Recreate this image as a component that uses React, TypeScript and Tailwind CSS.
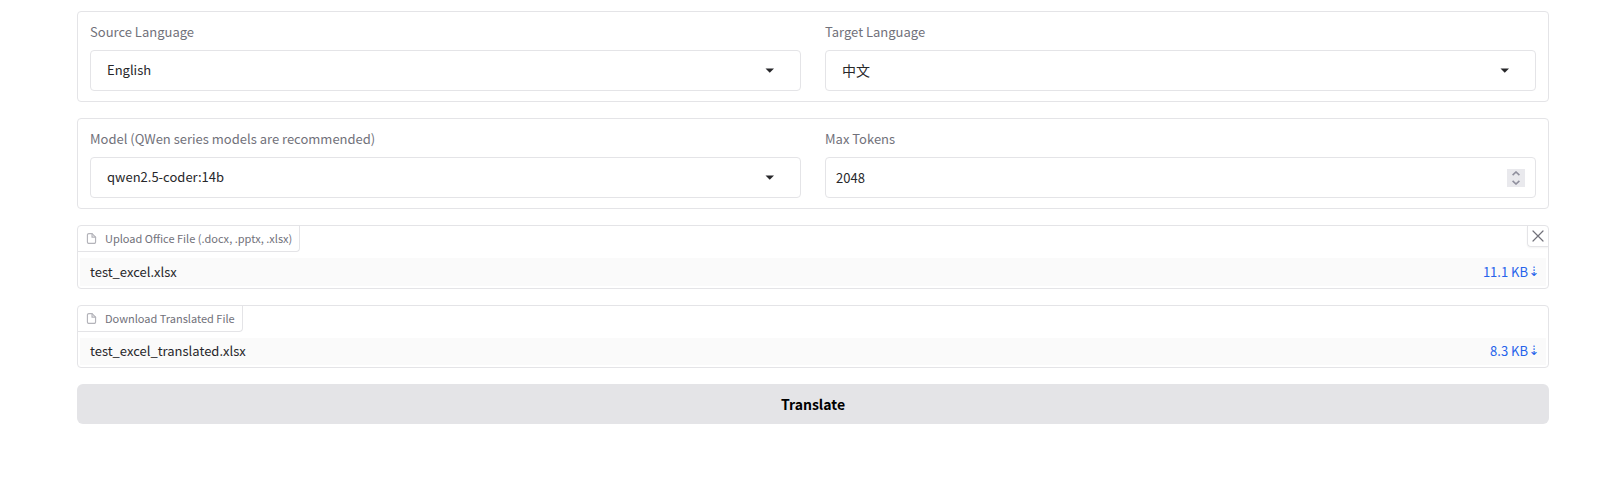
import { useState } from "react";
import type { ReactNode } from "react";

const label = "block text-[13px] leading-5 text-[#71717a]";
const field =
  "h-[41px] w-full appearance-none rounded border border-[#e4e4e7] bg-white pb-px leading-5 text-[#27272a] outline-none";

function Group({ children }: { children: ReactNode }) {
  return (
    <div className="grid grid-cols-2 gap-6 rounded border border-[#e4e4e7] bg-white px-3 py-2.5">
      {children}
    </div>
  );
}

function SelectField({ id, title, options, textSize = "text-[13px]" }: { id: string; title: string; options: string[]; textSize?: string }) {
  return (
    <div className="flex flex-col gap-2">
      <label htmlFor={id} className={label}>{title}</label>
      <div className="grid items-center">
        <select id={id} className={`${field} ${textSize} col-start-1 row-start-1 px-4`}>
          {options.map((o) => (
            <option key={o}>{o}</option>
          ))}
        </select>
        <svg
          className="pointer-events-none col-start-1 row-start-1 mr-[26px] justify-self-end"
          width="10"
          height="5"
          viewBox="0 0 10 5"
          fill="#27272a"
          aria-hidden="true"
        >
          <path d="M.5.5h8.500L4.750 4.800z" />
        </svg>
      </div>
    </div>
  );
}

function TokensField() {
  const [value, setValue] = useState(2048);
  return (
    <div className="flex flex-col gap-2">
      <label htmlFor="tokens" className={label}>Max Tokens</label>
      <div className="grid items-center">
        <input
          id="tokens"
          type="number"
          value={value}
          onChange={(e) => setValue(Number(e.target.value))}
          className={
            field +
            " col-start-1 row-start-1 px-2.5 text-[13px] [appearance:textfield] [&::-webkit-inner-spin-button]:appearance-none"
          }
        />
        <div className="col-start-1 row-start-1 mr-[11px] flex size-[18px] flex-col justify-self-end bg-[#e9e9ed] text-[#8f8f9d]">
          <button type="button" aria-label="Increase" className="flex h-[9px] items-center justify-center" onClick={() => setValue(value + 1)}>
            <svg width="8" height="5" viewBox="0 0 8 5" fill="none" stroke="currentColor" strokeWidth="1.6"><path d="M.6 4.200 4 1l3.400 3.200" /></svg>
          </button>
          <button type="button" aria-label="Decrease" className="flex h-[9px] items-center justify-center" onClick={() => setValue(value - 1)}>
            <svg width="8" height="5" viewBox="0 0 8 5" fill="none" stroke="currentColor" strokeWidth="1.6"><path d="M.6.8 4 4 7.400.8" /></svg>
          </button>
        </div>
      </div>
    </div>
  );
}

function FileIcon() {
  return (
    <svg width="13" height="13" viewBox="0 0 24 24" fill="none" stroke="#b4b4ba" strokeWidth="2.2" strokeLinecap="round" strokeLinejoin="round" aria-hidden="true">
      <path d="M13 3H7a2.500 2.500 0 0 0-2.500 2.500v13A2.500 2.500 0 0 0 7 21h10a2.500 2.500 0 0 0 2.500-2.500V9.500z" />
      <path d="M13 3v6.500h6.500" />
    </svg>
  );
}

function FilePanel({ title, name, size, rowHeight, clearable }: { title: string; name: string; size: string; rowHeight: string; clearable?: boolean }) {
  return (
    <section aria-label={title} className="overflow-hidden rounded border border-[#e4e4e7] bg-white">
      <div className="flex h-8 items-start justify-between">
        <h2 className="flex h-[26px] items-center gap-[7px] rounded-br border-r border-b border-[#e4e4e7] px-[7px] pb-px text-[11px] leading-4 text-[#71717a]">
          <FileIcon />
          {title}
        </h2>
        {clearable && (
          <button type="button" aria-label="Clear" className="flex size-[21px] items-center justify-center rounded-bl border-b border-l border-[#e4e4e7] text-[#71717a] shadow-xs">
            <svg width="12" height="12" viewBox="0 0 12 12" fill="none" stroke="currentColor" strokeWidth="1.2" strokeLinecap="round" aria-hidden="true">
              <path d="M1 1l10 10M11 1L1 11" />
            </svg>
          </button>
        )}
      </div>
      <div className="px-0.5 pb-0.5">
        <table className="w-full bg-[#fafafa] text-[13px] leading-5">
          <tbody>
            <tr className={rowHeight}>
              <td className="pb-px pl-2.5 text-[#27272a]">{name}</td>
              <td className="pr-2.5 pb-px">
                <a href="#download" className="flex items-center justify-end gap-1 text-[#2563eb]">
                  {size}
                  <span className="flex w-1 justify-center font-['DejaVu_Sans',sans-serif]">⇣</span>
                </a>
              </td>
            </tr>
          </tbody>
        </table>
      </div>
    </section>
  );
}

export default function App() {
  return (
    <main className="flex flex-col gap-4 bg-white pt-[11px] pr-12 pl-[77px] font-['Noto_Sans_CJK_SC',sans-serif]">
      <Group>
        <SelectField id="source" title="Source Language" options={["English", "中文"]} />
        <SelectField id="target" title="Target Language" options={["中文", "English"]} textSize="text-sm" />
      </Group>
      <Group>
        <SelectField id="model" title="Model (QWen series models are recommended)" options={["qwen2.5-coder:14b"]} />
        <TokensField />
      </Group>
      <FilePanel title="Upload Office File (.docx, .pptx, .xlsx)" name="test_excel.xlsx" size="11.1 KB" rowHeight="h-7" clearable />
      <FilePanel title="Download Translated File" name="test_excel_translated.xlsx" size="8.3 KB" rowHeight="h-[27px]" />
      <button type="button" className="h-10 rounded-md bg-[#e4e4e7] text-sm font-semibold text-black">
        Translate
      </button>
    </main>
  );
}
